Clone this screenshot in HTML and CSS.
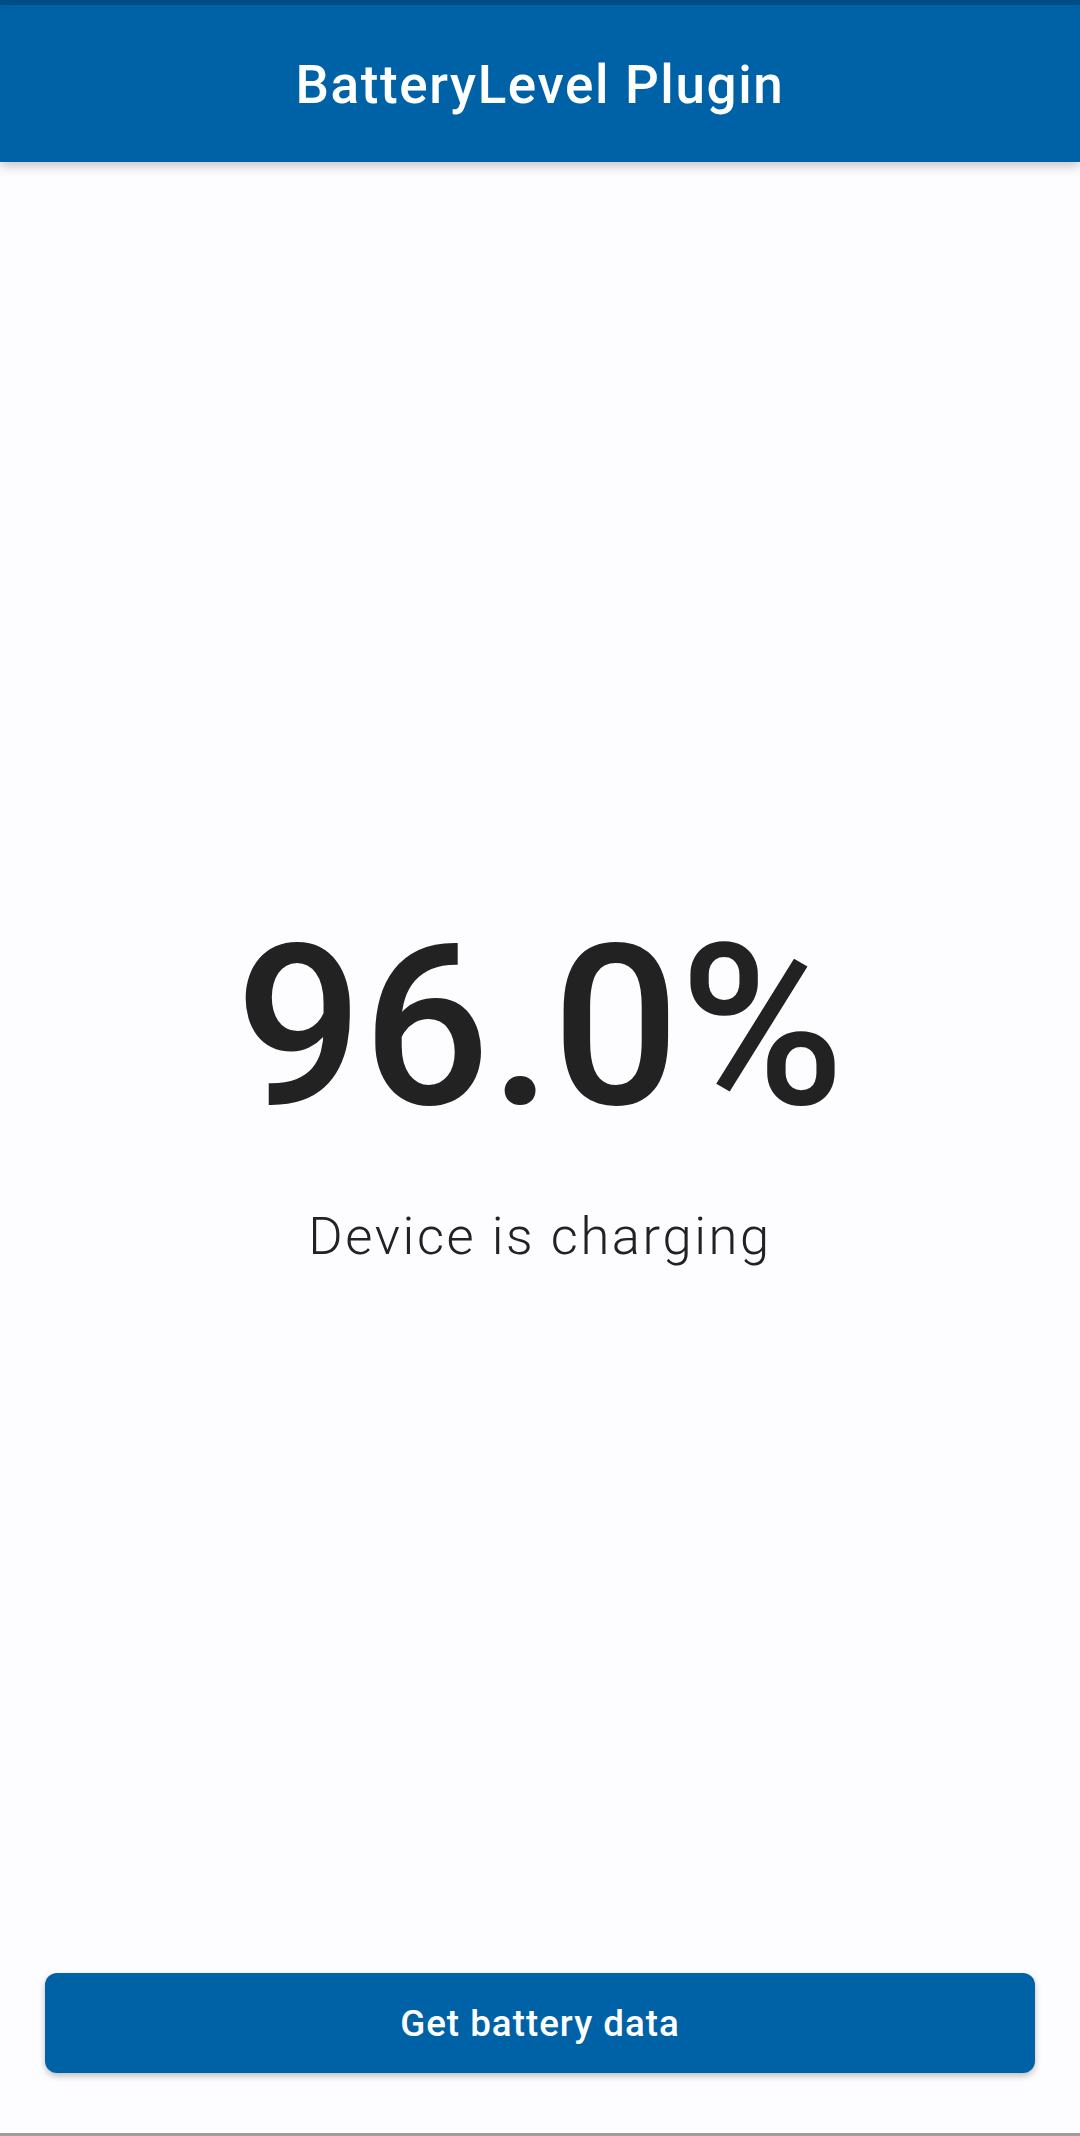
FILE: index.html
```html
<!DOCTYPE html>
<html lang="en">
<head>
<meta charset="utf-8">
<title>BatteryLevel Plugin</title>
<link rel="stylesheet" href="styles.css">
</head>
<body>
<div class="page">
  <div class="statusbar"></div>
  <header class="appbar">
    <h1 class="title">BatteryLevel Plugin</h1>
  </header>
  <main class="content">
    <div class="level">96.0%</div>
    <div class="state">Device is charging</div>
  </main>
  <div class="actions">
    <button class="btn" type="button">Get battery data</button>
  </div>
  <div class="navline"></div>
</div>
</body>
</html>
```
FILE: styles.css
```css
* { box-sizing: border-box; }
html, body {
  margin: 0;
  padding: 0;
  background: #fdfcff;
  font-family: Roboto, "Liberation Sans", sans-serif;
}
.page {
  height: 2136px;
  display: flex;
  flex-direction: column;
}
.statusbar {
  height: 5px;
  background: #004f88;
  flex: none;
}
.appbar {
  flex: none;
  height: 157px;
  background: #0062a6;
  display: flex;
  align-items: center;
  justify-content: center;
  box-shadow: 0 4px 10px rgba(0, 0, 0, 0.22);
  position: relative;
  z-index: 1;
}
.title {
  margin: 0;
  color: #ffffff;
  font-size: 53px;
  font-weight: 500;
  line-height: 1;
  letter-spacing: 1.6px;
  padding-top: 4px;
}
.content {
  flex: 1;
  display: flex;
  flex-direction: column;
  align-items: center;
  justify-content: center;
  padding-top: 44px;
}
.level {
  font-size: 224px;
  line-height: 1;
  font-weight: 500;
  color: #222222;
}
.state {
  margin-top: 70px;
  font-size: 52.5px;
  line-height: 1;
  font-weight: 300;
  color: #222222;
  letter-spacing: 2.6px;
}
.actions {
  flex: none;
  padding: 0 45px 60px;
}
.btn {
  display: block;
  width: 100%;
  height: 100px;
  border: none;
  border-radius: 12px;
  background: #0062a6;
  color: #ffffff;
  font-family: Roboto, "Liberation Sans", sans-serif;
  font-size: 36.75px;
  font-weight: 500;
  letter-spacing: 1px;
  box-shadow: 0 3px 6px rgba(0, 0, 0, 0.25);
}
.navline {
  flex: none;
  height: 3px;
  background: #9e9e9e;
}
```
